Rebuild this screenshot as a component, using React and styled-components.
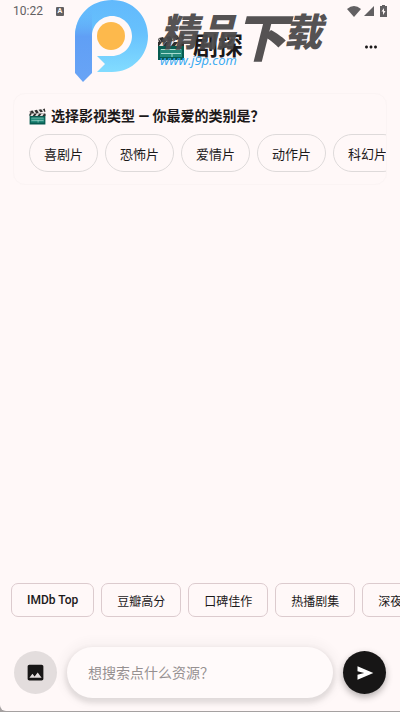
import React, { useState } from 'react';
import styled, { createGlobalStyle } from 'styled-components';
import { MdImage, MdMoreHoriz } from 'react-icons/md';

const genres = ['喜剧片', '恐怖片', '爱情片', '动作片', '科幻片', '悬疑片'];
const shortcuts = ['IMDb Top', '豆瓣高分', '口碑佳作', '热播剧集', '深夜治愈'];

const Clapper = ({ size }) => (
    <svg width={size} height={size} viewBox="0 0 28 28" aria-hidden="true">
        <path d="M1 5 26 1l1 5L2 10z" fill="#e8e4e2" />
        <path
            d="m2 5 4-1 3 5-4 1zm7-1 4-1 3 5-4 1zm7-1 4-1 3 4-4 1zm7-1 3-1 1 5-1 1zM1 5l1 5 2-1z"
            fill="#302e2e"
        />
        <path d="M1 10h26v17H1z" fill="#075b50" />
        <path d="M1 9h26v4H1z" fill="#302e2e" />
        <path d="m5 9h4l-3 4H2zm8 0h4l-3 4h-4zm8 0h4l-3 4h-4z" fill="#e8e4e2" />
        <path d="M3 16h22v8H3z" fill="#23897a" />
        <path d="M4 16.5h20M4 20.5h20M15 20v4" stroke="#a9ddd1" />
    </svg>
);

const BrandMark = () => (
    <svg width="73" height="82" viewBox="0 0 73 82" aria-hidden="true">
        <defs>
            <linearGradient id="ring" x1="0" y1="0" x2="0" y2="1">
                <stop offset="0" stopColor="#62b9fc" />
                <stop offset="0.45" stopColor="#67c1fd" />
                <stop offset="1" stopColor="#82dcff" />
            </linearGradient>
            <linearGradient id="stem" x1="0" y1="0" x2="0" y2="1">
                <stop offset="0" stopColor="#63b9fc" stopOpacity="0" />
                <stop offset="0.4" stopColor="#609ff5" />
                <stop offset="1" stopColor="#68a4f6" />
            </linearGradient>
        </defs>
        <path
            d="M0 36C0 15 16 0 37 0s36 16 36 36-16 36-36 36H22l8-8-8-8h15c11 0 20-9 20-20s-9-20-20-20-20 9-20 20z"
            fill="url(#ring)"
        />
        <path d="M0 36C0 23 7 12 17 6v67l-9 9-8-9z" fill="url(#stem)" />
        <circle cx="36" cy="36" r="14" fill="#fdb94c" />
    </svg>
);

function App() {
    const [query, setQuery] = useState('');

    return (
        <>
            <GlobalStyle />
            <Page>
                <StatusBar>
                    <Clock>10:22</Clock>
                    <InputBadge>A</InputBadge>
                    <StatusIcons>
                        <svg width="14" height="11" viewBox="0 0 14 11">
                            <path d="M0 3Q7-3 14 3L7 11z" />
                        </svg>
                        <svg width="10" height="10" viewBox="0 0 10 10">
                            <path d="M10 0v10H0z" />
                        </svg>
                        <svg width="7" height="12" viewBox="0 0 7 12">
                            <path d="M2 0h3v1h2v11H0V1h2z" />
                            <path
                                d="M4 3 1.5 6.5H3V10l2.500-4H4z"
                                fill="#fff8f8"
                            />
                        </svg>
                    </StatusIcons>
                </StatusBar>
                <Header>
                    <Title>
                        <Clapper size={28} />
                        剧探
                    </Title>
                    <MoreButton aria-label="更多">
                        <MdMoreHoriz size={18} />
                    </MoreButton>
                </Header>
                <Watermark>
                    <BrandMark />
                    <div>
                        <WatermarkName>
                            <span>精品</span>
                            <WatermarkTall>下</WatermarkTall>
                            <span>载</span>
                        </WatermarkName>
                        <WatermarkLink>www.j9p.com</WatermarkLink>
                    </div>
                </Watermark>
                <Main>
                    <GenreCard>
                        <GenreHeading>
                            <Clapper size={17} />
                            选择影视类型 — 你最爱的类别是？
                        </GenreHeading>
                        <GenreList>
                            {genres.map((genre) => (
                                <GenreButton key={genre}>{genre}</GenreButton>
                            ))}
                        </GenreList>
                    </GenreCard>
                </Main>
                <ShortcutList>
                    {shortcuts.map((shortcut, index) => (
                        <ShortcutButton key={shortcut} $strong={index === 0}>
                            {shortcut}
                        </ShortcutButton>
                    ))}
                </ShortcutList>
                <SearchForm onSubmit={(event) => event.preventDefault()}>
                    <ImageButton type="button" aria-label="上传图片">
                        <MdImage size={21} />
                    </ImageButton>
                    <SearchInput
                        aria-label="搜索"
                        placeholder="想搜索点什么资源？"
                        value={query}
                        onChange={(event) => setQuery(event.target.value)}
                    />
                    <SendButton type="submit" aria-label="发送">
                        <svg width="20" height="20" viewBox="0 0 24 24">
                            <path
                                d="M3 20v-6l8-2-8-2V4l19 8z"
                                fill="currentColor"
                            />
                        </svg>
                    </SendButton>
                </SearchForm>
            </Page>
        </>
    );
}

export default App;

const background = '#fff8f8';
const ink = '#1c191a';

const GlobalStyle = createGlobalStyle`
    * {
        box-sizing: border-box;
    }

    body {
        margin: 0;
        background: #a5a1a1;
        color: ${ink};
        font-family: Roboto, 'Noto Sans CJK SC', sans-serif;
    }

    button,
    input {
        font-family: inherit;
        color: inherit;
    }
`;

const Page = styled.div`
    position: relative;
    min-height: calc(100vh - 1px);
    display: flex;
    flex-direction: column;
    overflow: hidden;
    border-bottom-left-radius: 6px;
    background: ${background};
`;

const StatusBar = styled.div`
    height: 22px;
    padding: 0 13px;
    display: flex;
    align-items: center;
    color: #626062;
`;

const Clock = styled.span`
    font-size: 12px;
`;

const InputBadge = styled.span`
    width: 8px;
    height: 9px;
    margin-left: 13px;
    border-radius: 1px;
    background: #626062;
    color: ${background};
    font-size: 7px;
    font-weight: 700;
    line-height: 9px;
    text-align: center;
`;

const StatusIcons = styled.div`
    margin-left: auto;
    display: flex;
    align-items: center;
    gap: 3px;

    svg {
        fill: #626062;
    }

    svg:last-child {
        margin-left: 3px;
    }
`;

const Header = styled.header`
    height: 49px;
    padding: 0 16px;
    display: grid;
    grid-template-columns: 1fr auto 1fr;
    align-items: center;
`;

const Title = styled.h1`
    grid-column: 2;
    margin: 0;
    display: flex;
    align-items: center;
    gap: 8px;
    font-size: 25px;
    font-weight: 700;
    line-height: 36px;
`;

const MoreButton = styled.button`
    justify-self: end;
    padding: 4px;
    display: flex;
    border: 0;
    background: none;
`;

/* brand overlay, sits over the header */
const Watermark = styled.div`
    position: absolute;
    top: 0;
    left: 75px;
    display: flex;
    gap: 12px;
    pointer-events: none;
`;

const WatermarkName = styled.div`
    height: 52px;
    padding-top: 14px;
    display: flex;
    align-items: flex-start;
    color: #4c4a4b;
    font-size: 38px;
    font-style: italic;
    font-weight: 900;
    line-height: 38px;
    white-space: nowrap;
    opacity: 0.95;
`;

const WatermarkTall = styled.span`
    margin: 0 -2px;
    font-size: 52px;
    line-height: 52px;
`;

const WatermarkLink = styled.div`
    color: #35a9f2;
    font-family: 'Open Sans', sans-serif;
    font-size: 13px;
    font-style: italic;
    font-weight: 500;
    line-height: 16px;
`;

const Main = styled.main`
    flex: 1;
    padding: 22px 13px 0;
`;

const GenreCard = styled.section`
    padding: 12px 0 12px 15px;
    border: 1px solid #fbf4f4;
    border-radius: 12px;
    overflow: hidden;
`;

const GenreHeading = styled.h2`
    margin: 0 0 8px;
    display: flex;
    align-items: center;
    gap: 5px;
    font-size: 14px;
    font-weight: 700;
    line-height: 20px;
    white-space: nowrap;
`;

const GenreList = styled.div`
    display: flex;
    gap: 7px;
    overflow: hidden;
`;

const GenreButton = styled.button`
    flex: none;
    height: 38px;
    padding: 0 14px;
    border: 1px solid #dedada;
    border-radius: 19px;
    background: none;
    font-size: 13px;
`;

const ShortcutList = styled.div`
    padding: 0 11px;
    display: flex;
    gap: 7px;
    overflow: hidden;
`;

const ShortcutButton = styled.button`
    flex: none;
    height: 34px;
    padding: 0 15px;
    border: 1px solid #dccbce;
    border-radius: 7px;
    background: none;
    font-size: 12px;
    font-weight: ${(props) => (props.$strong ? 500 : 400)};
`;

const SearchForm = styled.form`
    padding: 30px 14px 13px;
    display: flex;
    align-items: center;
    gap: 10px;
`;

const RoundButton = styled.button`
    flex: none;
    width: 43px;
    height: 43px;
    padding: 0;
    display: flex;
    align-items: center;
    justify-content: center;
    border: 0;
    border-radius: 50%;
`;

const ImageButton = styled(RoundButton)`
    background: #e3dddd;
    color: #171616;
`;

const SendButton = styled(RoundButton)`
    background: #171616;
    color: #fff;
    box-shadow: 0 3px 7px rgba(0, 0, 0, 0.3);
`;

const SearchInput = styled.input`
    flex: 1;
    min-width: 0;
    height: 51px;
    padding: 0 21px;
    border: 0;
    border-radius: 26px;
    background: #fffafa;
    box-shadow: 0 3px 5px 2px rgba(0, 0, 0, 0.1),
        0 0 8px 8px rgba(0, 0, 0, 0.025);
    font-size: 14px;
    outline: none;

    &::placeholder {
        color: #969091;
    }
`;
